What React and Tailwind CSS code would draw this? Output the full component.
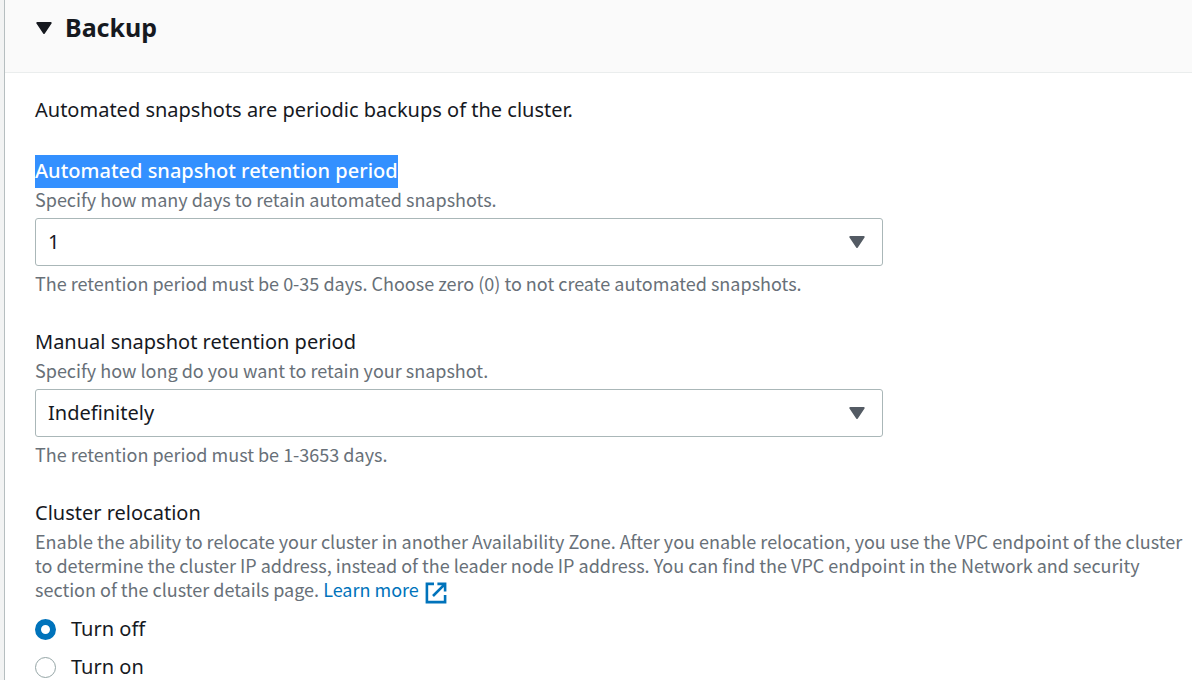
import React from "react";

const hintClass = "font-['Noto_Sans_CJK_SC','Noto_Sans',sans-serif] text-lg leading-6 text-[#687078]";
const lineClass = "pb-0.5 leading-[31px]";

function Triangle({ className }) {
  return (
    <svg viewBox="0 0 16 12" className={className} fill="currentColor" stroke="currentColor" strokeWidth="2" strokeLinejoin="round" aria-hidden="true">
      <path d="M1.3 1h13.4L8 11z" />
    </svg>
  );
}

function ExternalIcon() {
  return (
    <svg viewBox="0 0 22 22" className="-my-1 ml-1.5 inline-block size-[22px] align-[-3px]" fill="none" stroke="currentColor" strokeWidth="2.6" aria-hidden="true">
      <path d="M9 1.9H1.9v18.2h18.2V13" />
      <path d="M12.4 1.9h7.7v7.7M20.1 1.9L8 14" />
    </svg>
  );
}

function SelectField({ id, label, hint, note, options, selected }) {
  return (
    <div>
      <label htmlFor={id} className="flex">
        <span className={selected ? `bg-[#3390ff] font-medium text-white ${lineClass}` : lineClass}>{label}</span>
      </label>
      <p className={`-mt-px ${hintClass}`}>{hint}</p>
      <div className="mt-[7px] grid w-full max-w-[848px] items-center">
        <select id={id} className="col-start-1 row-start-1 h-12 w-full appearance-none rounded-[3px] border border-[#aab7b8] bg-white pr-12 pl-3 text-[#16191f]">
          {options.map((o) => (
            <option key={o}>{o}</option>
          ))}
        </select>
        <Triangle className="pointer-events-none col-start-1 row-start-1 mr-[18px] h-3 w-4 justify-self-end text-[#545b64]" />
      </div>
      <p className={`mt-[5px] ${hintClass}`}>{note}</p>
    </div>
  );
}

function Radio({ label, defaultChecked }) {
  return (
    <label className="flex items-center gap-[15px]">
      <input
        type="radio"
        name="relocation"
        defaultChecked={defaultChecked}
        className="size-[21px] appearance-none rounded-full border border-[#95a5a6] bg-white checked:border-[6px] checked:border-[#0073bb]"
      />
      <span className={lineClass}>{label}</span>
    </label>
  );
}

export default function App() {
  return (
    <div className="h-screen overflow-hidden bg-[#f2f3f3] pl-1 font-['Noto_Sans',sans-serif] text-xl text-[#16191f]">
      <section className="min-h-full border-l border-[#b6bec0] bg-white">
        <header className="border-b border-[#eaeded] bg-[#fafafa] pt-2.5 pb-[26px] pl-[31px]">
          <h2 className="text-[25px] font-bold">
            <button type="button" className="flex items-center gap-[13px]">
              <Triangle className="h-3 w-4" />
              <span className="pb-0.5 leading-[34px]">Backup</span>
            </button>
          </h2>
        </header>
        <div className="pt-[21px] pl-[30px]">
          <p className={`mb-7 ${lineClass}`}>Automated snapshots are periodic backups of the cluster.</p>
          <div className="flex flex-col gap-[31px]">
            <SelectField
              id="automated"
              label="Automated snapshot retention period"
              hint="Specify how many days to retain automated snapshots."
              note="The retention period must be 0-35 days. Choose zero (0) to not create automated snapshots."
              options={["1", "7", "14", "35"]}
              selected
            />
            <SelectField
              id="manual"
              label="Manual snapshot retention period"
              hint="Specify how long do you want to retain your snapshot."
              note="The retention period must be 1-3653 days."
              options={["Indefinitely", "Custom value"]}
            />
            <fieldset>
              <legend className={lineClass}>Cluster relocation</legend>
              <p className={`-mt-px ${hintClass}`}>
                Enable the ability to relocate your cluster in another Availability Zone. After you enable relocation, you use the VPC endpoint of the cluster to determine the cluster IP address, instead of the leader node IP address. You can find the VPC endpoint in the Network and security section of the cluster details page.{" "}
                <a href="#learn-more" className="text-[#0073bb]">
                  Learn more
                  <ExternalIcon />
                </a>
              </p>
              <div className="mt-3 flex flex-col gap-[5px]">
                <Radio label="Turn off" defaultChecked />
                <Radio label="Turn on" />
              </div>
            </fieldset>
          </div>
        </div>
      </section>
    </div>
  );
}
